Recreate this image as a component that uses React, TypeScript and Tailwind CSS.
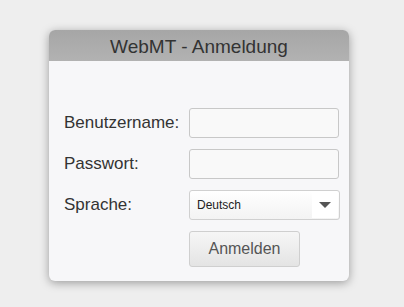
import React from "react";

export default function App() {
  const font = { fontFamily: '"Liberation Sans", Arial, sans-serif' };
  return (
    <div className="w-[404px] h-[307px] bg-[#eeeeee] pt-[30px] pl-[49px]" style={font}>
      <div className="w-[300px] h-[251px] rounded-[6px] bg-[#f7f7f9] shadow-[0_2px_10px_rgba(0,0,0,0.35)] overflow-hidden">
        <div className="h-[31px] bg-gradient-to-b from-[#a6a6a6] to-[#b2b2b2] flex items-center justify-center text-[19px] text-[#333] pt-[3px]">
          WebMT - Anmeldung
        </div>
        <div className="pt-[47px] pl-[15px] flex flex-col gap-[11px]">
          <div className="flex items-center">
            <label className="w-[125px] text-[17px] text-[#333]">Benutzername:</label>
            <input className="w-[150px] h-[30px] bg-[#f9f9f9] border border-[#c8c8c8] rounded-[3px] outline-none" />
          </div>
          <div className="flex items-center">
            <label className="w-[125px] text-[17px] text-[#333]">Passwort:</label>
            <input type="password" className="w-[150px] h-[30px] bg-[#f9f9f9] border border-[#c8c8c8] rounded-[3px] outline-none" />
          </div>
          <div className="flex items-center">
            <label className="w-[125px] text-[17px] text-[#333]">Sprache:</label>
            <div className="w-[151px] h-[30px] bg-gradient-to-b from-white to-[#f3f3f3] border border-[#d0d0d0] rounded-[3px] flex items-center justify-between pl-[7px] pr-[1px]">
              <span className="text-[12px] text-[#222]">Deutsch</span>
              <div className="w-[26px] h-[26px] bg-white flex items-center justify-center">
                <svg width="12" height="7" viewBox="0 0 12 7">
                  <polygon points="0,0 12,0 6,6" fill="#555" />
                </svg>
              </div>
            </div>
          </div>
          <div className="flex items-center">
            <div className="w-[125px]" />
            <button className="w-[111px] h-[36px] bg-gradient-to-b from-[#f6f6f6] to-[#e4e4e4] border border-[#cfcfcf] rounded-[3px] text-[16px] text-[#555]">
              Anmelden
            </button>
          </div>
        </div>
      </div>
    </div>
  );
}
